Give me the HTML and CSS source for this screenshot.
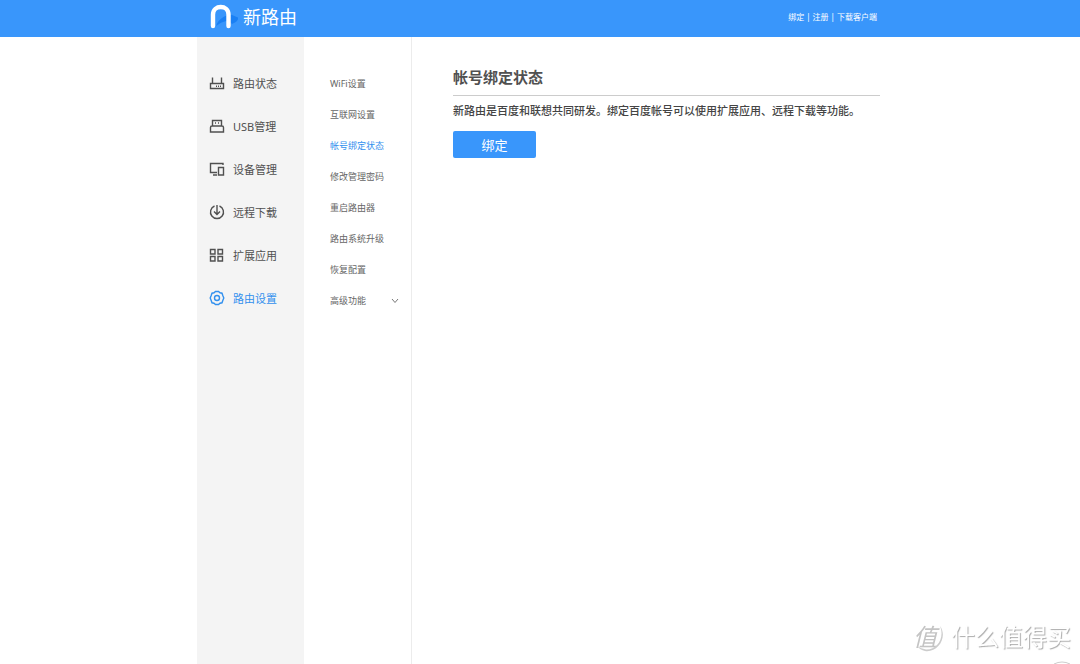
FILE: index.html
```html
<!DOCTYPE html>
<html lang="zh-CN">
<head>
<meta charset="utf-8">
<meta name="viewport" content="width=device-width, initial-scale=1">
<title>新路由</title>
<link rel="stylesheet" href="styles.css">
</head>
<body>
<header class="topbar">
  <div class="topbar-inner">
    <a class="brand" href="#">
      <svg class="brand-mark" viewBox="0 0 30 25" aria-hidden="true">
        <path d="M6 22C9 14 17 10 22 11L28 13.5Q29 17 22 20Q20 17 16 17Q11 18 6 22Z" fill="#1a80f4"/>
        <path d="M3 22V10.5C3 0.5 18.5 0.5 18.5 10.5V22" fill="none" stroke="#fff" stroke-width="4.4" stroke-linecap="round"/>
      </svg>
      <span class="brand-name">新路由</span>
    </a>
    <nav class="toplinks" aria-label="帐号">
      <a href="#">绑定</a><span>|</span><a href="#">注册</a><span>|</span><a href="#">下载客户端</a>
    </nav>
  </div>
</header>
<div class="layout">
  <nav class="sidebar" aria-label="主菜单">
    <a class="side-item" href="#">
      <svg class="icon" viewBox="0 0 16 16" aria-hidden="true"><path d="M1.5 8.5H14.5V13.5H1.5ZM3.5 8V2.5M12.5 8V2.5"/><path d="M7 11.2H8M9 11.2H10M11 11.2H12"/></svg>
      <span>路由状态</span>
    </a>
    <a class="side-item" href="#">
      <svg class="icon" viewBox="0 0 16 16" aria-hidden="true"><path d="M3.5 8V2.5H12.5V8M1.5 14V9.5Q1.5 8 3 8H13Q14.5 8 14.5 9.5V14Z"/><path d="M6 5H7M9 5H10"/></svg>
      <span>USB管理</span>
    </a>
    <a class="side-item" href="#">
      <svg class="icon" viewBox="0 0 16 16" aria-hidden="true"><path d="M14 4V2.5H1.5V11.5H8M4 14H8M9.5 6.5H14.5V14H9.5Z"/></svg>
      <span>设备管理</span>
    </a>
    <a class="side-item" href="#">
      <svg class="icon" viewBox="0 0 16 16" aria-hidden="true"><path d="M5.5 2A6.5 6.5 0 1 0 10.5 2M8 1V10.5M5 7.5L8 10.5L11 7.5"/></svg>
      <span>远程下载</span>
    </a>
    <a class="side-item" href="#">
      <svg class="icon" viewBox="0 0 16 16" aria-hidden="true"><path d="M1.5 2.5H6V7H1.5ZM9 2.5H13.5V7H9ZM1.5 9.5H6V14H1.5ZM9 9.5H13.5V14H9Z"/></svg>
      <span>扩展应用</span>
    </a>
    <a class="side-item active" href="#" aria-current="true">
      <svg class="icon" viewBox="0 0 16 16" aria-hidden="true"><path d="M6.5 1.5H9.5L11 2.8L13 3.2L13.8 5.5L14.8 8L13.8 10.5L13 12.8L11 13.2L9.5 14.5H6.5L5 13.2L3 12.8L2.2 10.5L1.2 8L2.2 5.5L3 3.2L5 2.8Z"/><circle cx="8" cy="8" r="2.5"/></svg>
      <span>路由设置</span>
    </a>
  </nav>
  <nav class="submenu" aria-label="路由设置">
    <a class="sub-item" href="#">WiFi设置</a>
    <a class="sub-item" href="#">互联网设置</a>
    <a class="sub-item active" href="#" aria-current="page">帐号绑定状态</a>
    <a class="sub-item" href="#">修改管理密码</a>
    <a class="sub-item" href="#">重启路由器</a>
    <a class="sub-item" href="#">路由系统升级</a>
    <a class="sub-item" href="#">恢复配置</a>
    <button class="sub-item" type="button" aria-expanded="false">高级功能
      <svg class="chevron" viewBox="0 0 8 6" aria-hidden="true"><path d="M1 1L4 4.5L7 1"/></svg>
    </button>
  </nav>
  <main class="content">
    <h1 class="title">帐号绑定状态</h1>
    <p class="desc">新路由是百度和联想共同研发。绑定百度帐号可以使用扩展应用、远程下载等功能。</p>
    <button class="primary" type="button">绑定</button>
  </main>
</div>
<div class="watermark">
  <span class="seal">值
    <svg class="seal-ring" viewBox="0 0 32 32" aria-hidden="true"><path d="M27 5C35 16 25 32 12 30Q7 29 4 25Q8 28 13 28.5C24 29 32 17 27 5Z"/></svg>
  </span>
  <span>什么值得买</span>
</div>
<svg class="corner-arc" viewBox="0 0 22 4" aria-hidden="true"><path d="M3 4Q11 0 19 4"/></svg>
</body>
</html>
```
FILE: styles.css
```css
* {
  box-sizing: border-box;
}

body {
  margin: 0;
  min-height: 100vh;
  display: flex;
  flex-direction: column;
  background: #fff;
  color: #505050;
  font-family: "Noto Sans", "Noto Sans CJK SC", sans-serif;
  font-size: 11px;
}

a {
  color: inherit;
  text-decoration: none;
}

button {
  border: 0;
  font-family: inherit;
  cursor: pointer;
}

.topbar {
  background: #3996fb;
  color: #fff;
}

.topbar-inner,
.layout {
  width: 100%;
  max-width: 686px;
  margin: 0 auto;
}

.topbar-inner {
  height: 37px;
  padding: 0 6px 4px 13px;
  display: flex;
  align-items: center;
  justify-content: space-between;
}

.brand {
  display: flex;
  align-items: center;
  gap: 3px;
}

.brand-mark {
  width: 30px;
  height: 25px;
}

.brand-name {
  font-size: 18px;
  line-height: 24px;
}

.toplinks {
  display: flex;
  gap: 2px;
  font-size: 8px;
  line-height: 12px;
}

.layout {
  flex: 1;
  display: flex;
}

.sidebar {
  width: 107px;
  padding-top: 24px;
  background: #f4f4f4;
}

.side-item {
  height: 43px;
  padding-left: 12px;
  display: flex;
  align-items: center;
  gap: 8px;
}

.icon {
  width: 16px;
  height: 16px;
  fill: none;
  stroke: currentColor;
  stroke-width: 1.4;
}

.submenu {
  width: 108px;
  padding-top: 31px;
  border-right: 1px solid #ececec;
}

.sub-item {
  width: 100%;
  height: 31px;
  padding: 0 12px 0 26px;
  display: flex;
  align-items: center;
  justify-content: space-between;
  background: none;
  color: #666;
  font-size: 9px;
}

.side-item.active,
.sub-item.active {
  color: #3290ee;
}

.chevron {
  width: 8px;
  height: 6px;
  fill: none;
  stroke: #777;
}

.content {
  flex: 1;
  padding: 28px 3px 0 41px;
}

.title {
  margin: 0;
  padding-bottom: 6px;
  border-bottom: 1px solid #ccc;
  font-size: 15px;
  line-height: 24px;
  font-weight: 700;
}

.desc {
  margin: 6px 0 12px;
  font-size: 11px;
  line-height: 17px;
  font-weight: 500;
  color: #444;
}

.primary {
  display: block;
  width: 83px;
  height: 27px;
  padding: 0;
  border-radius: 2px;
  background: #3996fb;
  color: #fff;
  font-size: 13px;
}

.watermark {
  position: fixed;
  right: 9px;
  bottom: 9px;
  display: flex;
  align-items: center;
  gap: 8px;
  color: #fff;
  font-size: 24px;
  line-height: 36px;
  text-shadow: 1px 1px 1px #aaa;
}

.seal {
  position: relative;
  width: 30px;
  color: #c4c4c4;
  font-style: italic;
  text-shadow: none;
}

.seal-ring {
  position: absolute;
  left: 0;
  top: 2px;
  width: 32px;
  height: 32px;
  fill: #ccc;
}

.corner-arc {
  position: fixed;
  right: 7px;
  bottom: 0;
  width: 22px;
  height: 4px;
  fill: none;
  stroke: #ccc;
}
```
